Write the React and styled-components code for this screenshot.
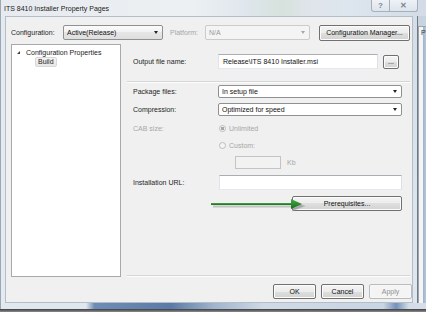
import React from 'react';
import styled, { createGlobalStyle } from 'styled-components';

const Global = createGlobalStyle`
  html, body { margin: 0; padding: 0; background: #ffffff; }
  body { font-family: "Liberation Sans", Arial, sans-serif; }
`;

const Window = styled.div`
  position: relative;
  width: 426px;
  height: 312px;
  overflow: hidden;
  display: flex;
  flex-direction: column;
  background: #e3e9ef;
  font-family: "Liberation Sans", Arial, sans-serif;
  font-size: 7px;
  color: #1e1e1e;
`;

const TitleBar = styled.div`
  flex: none;
  height: 16px;
  display: flex;
  align-items: flex-start;
  box-sizing: border-box;
  border-left: 1px solid #9ba7b3;
  background: linear-gradient(90deg, #e7ebef 0%, #ecf0f3 45%, #dfe6ec 58%, #d6e2dc 66%, #e0e4ea 72%, #dde6ee 82%, #d3dce6 100%);
`;

const Title = styled.div`
  padding: 5px 0 0 3px;
  line-height: 8px;
  color: #1a1a1a;
  white-space: nowrap;
`;

const Caption = styled.div`
  margin-left: auto;
  margin-right: 8px;
  display: flex;
  height: 12px;
  box-sizing: border-box;
  border: 1px solid #a5b0bc;
  border-top: none;
  border-radius: 0 0 3px 3px;
  background: linear-gradient(#eef2f6, #dde4ec);
`;

const CaptionButton = styled.div`
  width: ${p => p.$w}px;
  display: flex;
  align-items: center;
  justify-content: center;
  color: #7a8694;
  font-size: 8px;
  font-weight: bold;
  & + & { border-left: 1px solid #a5b0bc; }
`;

const Body = styled.div`
  flex: none;
  height: 287px;
  display: flex;
`;

const SideFrame = styled.div`
  width: 5px;
  flex: none;
  box-sizing: border-box;
  border-left: 1px solid #9ba7b3;
  background: #e4eaf0;
`;

const Client = styled.div`
  width: 408px;
  flex: none;
  box-sizing: border-box;
  border: 1px solid #b4bec8;
  background: #f0f0f0;
  display: flex;
  flex-direction: column;
`;

const RightFrame = styled.div`
  flex: 1;
  display: flex;
`;

const GlassStrip = styled.div`
  width: 4px;
  flex: none;
  background: linear-gradient(#d5dee7, #dfe6ee);
  border-right: 1px solid #6f7a86;
`;

const BackWindow = styled.div`
  flex: 1;
  display: flex;
  flex-direction: column;
  background: #c9d3de;
`;

const BackPanel = styled.div`
  margin-top: 10px;
  flex: 1;
  box-sizing: border-box;
  border-top: 1px solid #9aa4ae;
  border-left: 1px solid #9aa4ae;
  background: linear-gradient(90deg, #f4f4f4 0%, #f4f4f4 60%, #9fb3cb 60%, #b9c8da 100%);
  padding: 2px 0 0 2px;
  font-size: 7px;
  color: #333;
`;

const BottomFrame = styled.div`
  flex: none;
  height: 6px;
  box-sizing: border-box;
  border-left: 1px solid #9ba7b3;
  background: linear-gradient(90deg, #e1e8ef 0%, #dfe7ef 20%, #6e8db6 22%, #5b7ba6 40%, #9fb4cd 50%, #cfdae6 62%, #c8d5e2 90%, #7592ba 93%, #d5dee8 96%);
`;

const Shadow = styled.div`
  flex: 1;
  background: linear-gradient(#3e3e3e, #8c8c8c);
`;

/* ---- client content ---- */

const TopBar = styled.div`
  margin-top: 8px;
  padding-left: 5px;
  height: 15px;
  display: flex;
  align-items: center;
`;

const Label = styled.span`
  width: ${p => p.$w}px;
  flex: none;
  white-space: nowrap;
  color: ${p => (p.$disabled ? '#a6a6a6' : '#1e1e1e')};
  margin-left: ${p => p.$ml || 0}px;
`;

const Combo = styled.div`
  width: ${p => (p.$w ? `${p.$w}px` : 'auto')};
  flex: ${p => (p.$w ? 'none' : '1')};
  height: ${p => p.$h || 13}px;
  box-sizing: border-box;
  display: flex;
  align-items: center;
  padding-left: 3px;
  border: 1px solid ${p => (p.$disabled ? '#cbcbcb' : '#8f9091')};
  border-radius: 2px;
  background: ${p =>
    p.$disabled
      ? '#f4f4f4'
      : p.$raised
      ? 'linear-gradient(#fbfbfb, #f1f1f1 50%, #e6e6e6 50%, #dedede)'
      : '#ffffff'};
  color: ${p => (p.$disabled ? '#9a9a9a' : '#111')};
  white-space: nowrap;
`;

const DropArrow = styled.span`
  margin-left: auto;
  margin-right: 4px;
  width: 0;
  height: 0;
  border-left: 2px solid transparent;
  border-right: 2px solid transparent;
  border-top: 3px solid ${p => (p.$disabled ? '#a8a8a8' : '#222')};
`;

const Button = styled.div`
  width: ${p => (p.$w ? `${p.$w}px` : 'auto')};
  flex: none;
  height: ${p => p.$h || 15}px;
  margin-left: ${p => p.$ml || 0}px;
  box-sizing: border-box;
  display: flex;
  align-items: center;
  justify-content: center;
  border: 1px solid ${p => (p.$disabled ? '#b8bcbf' : '#707070')};
  border-radius: 2px;
  background: ${p =>
    p.$disabled
      ? '#f4f4f4'
      : 'linear-gradient(#f4f4f4, #ececec 50%, #dfdfdf 50%, #d2d2d2)'};
  box-shadow: inset 0 0 0 1px ${p => (p.$disabled ? '#f7f7f7' : '#fcfcfc')};
  color: ${p => (p.$disabled ? '#909090' : '#111')};
  white-space: nowrap;
`;

const Main = styled.div`
  margin-top: 4px;
  height: 233px;
  display: flex;
`;

const Tree = styled.div`
  margin-left: 5px;
  width: 110px;
  flex: none;
  box-sizing: border-box;
  border: 1px solid #a9a9a9;
  background: #ffffff;
  padding-top: 2px;
  display: flex;
  flex-direction: column;
`;

const TreeRow = styled.div`
  height: 10px;
  display: flex;
  align-items: center;
  padding-left: ${p => p.$indent}px;
  white-space: nowrap;
  color: #1a1a1a;
`;

const Expander = styled.span`
  width: 0;
  height: 0;
  margin-right: 6px;
  border-left: 3px solid transparent;
  border-bottom: 3px solid #3c3c3c;
`;

const Selected = styled.span`
  padding: 0 2px;
  line-height: 8px;
  border: 1px solid #d8d8d8;
  border-radius: 2px;
  background: linear-gradient(#f4f4f4, #e6e6e6);
`;

const Pane = styled.div`
  flex: 1;
  padding: 0 2px 0 6px;
  display: flex;
  flex-direction: column;
`;

const Row = styled.div`
  position: relative;
  margin-top: ${p => p.$mt}px;
  height: ${p => p.$h}px;
  padding: 0 8px 0 6px;
  display: flex;
  align-items: center;
  justify-content: ${p => (p.$end ? 'flex-end' : 'flex-start')};
`;

const TextBox = styled.div`
  width: ${p => (p.$w ? `${p.$w}px` : 'auto')};
  flex: ${p => (p.$w ? 'none' : '1')};
  height: ${p => p.$h || 15}px;
  margin-left: ${p => p.$ml || 0}px;
  box-sizing: border-box;
  display: flex;
  align-items: center;
  padding-left: 4px;
  border: 1px solid;
  border-color: ${p => (p.$disabled ? '#c4c4c4' : '#abadb3 #dbdfe6 #e3e9ef #e2e3ea')};
  background: ${p => (p.$disabled ? '#f2f2f2' : '#ffffff')};
  color: #111;
  white-space: nowrap;
`;

const Separator = styled.div`
  margin-top: ${p => p.$mt || 0}px;
  height: 0;
  border-top: 1px solid #d5d5d5;
  border-bottom: 1px solid #fdfdfd;
`;

const Spacer = styled.div`
  flex: 1;
`;

const Radio = styled.span`
  width: 7px;
  height: 7px;
  flex: none;
  box-sizing: border-box;
  margin-right: 3px;
  border-radius: 50%;
  border: 1px solid #bdbdbd;
  background: radial-gradient(circle, ${p => (p.$checked ? '#a8a8a8 0 1.6px, #f2f2f2 1.8px' : '#f4f4f4 0')});
`;

const RadioText = styled.span`
  color: #a6a6a6;
  white-space: nowrap;
`;

const Unit = styled.span`
  margin-left: 6px;
  color: #a6a6a6;
`;

const Footer = styled.div`
  margin-top: 7px;
  height: 15px;
  display: flex;
  justify-content: flex-end;
  gap: 5px;
`;

const ArrowMark = styled.svg`
  position: absolute;
  left: 84px;
  top: 2px;
  overflow: visible;
`;

const GreenArrow = () => (
  <ArrowMark width="92" height="12" viewBox="0 0 92 12">
    <defs>
      <linearGradient id="ga" x1="0" y1="0" x2="0" y2="1">
        <stop offset="0" stopColor="#4aa84a" />
        <stop offset="1" stopColor="#14701a" />
      </linearGradient>
    </defs>
    <path d="M1 7.5 H81 M81 3 L91 7 L81 11 Z" stroke="#8a8a8a" strokeOpacity="0.45" strokeWidth="2" fill="#8a8a8a" fillOpacity="0.45" transform="translate(1,1)" />
    <rect x="0" y="5" width="81" height="2" fill="url(#ga)" />
    <path d="M80 1 L91 6 L80 11 Z" fill="url(#ga)" />
  </ArrowMark>
);

export default function App() {
  return (
    <>
      <Global />
      <Window>
        <TitleBar>
          <Title>ITS 8410 Installer Property Pages</Title>
          <Caption>
            <CaptionButton $w={17}>?</CaptionButton>
            <CaptionButton $w={27}>✕</CaptionButton>
          </Caption>
        </TitleBar>
        <Body>
          <SideFrame />
          <Client>
            <TopBar>
              <Label $w={52}>Configuration:</Label>
              <Combo $w={100} $h={15} $raised>
                Active(Release)
                <DropArrow />
              </Combo>
              <Label $w={35} $ml={7} $disabled>Platform:</Label>
              <Combo $w={105} $h={15} $disabled>
                N/A
                <DropArrow $disabled />
              </Combo>
              <Button $w={91} $ml={9} $h={16}>Configuration Manager...</Button>
            </TopBar>
            <Main>
              <Tree>
                <TreeRow $indent={5}>
                  <Expander />
                  Configuration Properties
                </TreeRow>
                <TreeRow $indent={23}>
                  <Selected>Build</Selected>
                </TreeRow>
              </Tree>
              <Pane>
                <Row $mt={10} $h={15}>
                  <Label $w={85}>Output file name:</Label>
                  <TextBox $w={160}>Release\ITS 8410 Installer.msi</TextBox>
                  <Button $w={16} $h={14} $ml={5}>...</Button>
                </Row>
                <Separator $mt={12} />
                <Row $mt={2} $h={13}>
                  <Label $w={85}>Package files:</Label>
                  <Combo>
                    In setup file
                    <DropArrow />
                  </Combo>
                </Row>
                <Row $mt={5} $h={13}>
                  <Label $w={85}>Compression:</Label>
                  <Combo>
                    Optimized for speed
                    <DropArrow />
                  </Combo>
                </Row>
                <Row $mt={8} $h={9}>
                  <Label $w={86} $disabled>CAB size:</Label>
                  <Radio $checked />
                  <RadioText>Unlimited</RadioText>
                </Row>
                <Row $mt={8} $h={9}>
                  <Label $w={86} />
                  <Radio />
                  <RadioText>Custom:</RadioText>
                </Row>
                <Row $mt={6} $h={13}>
                  <Label $w={85} />
                  <TextBox $w={46} $h={13} $ml={17} $disabled />
                  <Unit>Kb</Unit>
                </Row>
                <Row $mt={6} $h={15}>
                  <Label $w={86}>Installation URL:</Label>
                  <TextBox />
                </Row>
                <Row $mt={6} $h={15} $end>
                  <GreenArrow />
                  <Button $w={110}>Prerequisites...</Button>
                </Row>
                <Spacer />
                <Separator />
              </Pane>
            </Main>
            <Footer>
              <Button $w={43}>OK</Button>
              <Button $w={43}>Cancel</Button>
              <Button $w={43} $disabled>Apply</Button>
            </Footer>
          </Client>
          <RightFrame>
            <GlassStrip />
            <BackWindow>
              <BackPanel>P</BackPanel>
            </BackWindow>
          </RightFrame>
        </Body>
        <BottomFrame />
        <Shadow />
      </Window>
    </>
  );
}
